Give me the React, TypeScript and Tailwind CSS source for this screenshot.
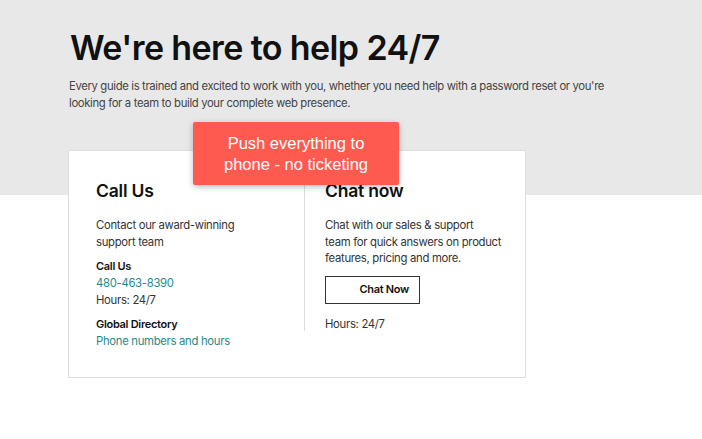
import React from 'react';

const sans = { fontFamily: 'Inter, "Noto Sans", sans-serif' };

export default function App() {
  return (
    <main
      style={sans}
      className="relative h-[439px] w-[702px] overflow-hidden bg-[linear-gradient(to_bottom,#e8e8e8_195px,#ffffff_195px)] px-[68px] pt-[26px]"
    >
      {/* HERO */}
      <h1 className="pl-[2px] text-[34px] font-semibold leading-[44px] tracking-[-0.6px] text-[#111111]">
        We're here to help 24/7
      </h1>
      <p className="mt-[8px] w-[560px] pl-px text-[11.3px] leading-[16.5px] tracking-[-0.35px] text-[#444444]">
        Every guide is trained and excited to work with you, whether you need help with a password reset or you're
        looking for a team to build your complete web presence.
      </p>

      {/* CARD */}
      <section className="mt-[39px] flex h-[228px] w-[458px] items-start border border-[#dedede] bg-white tracking-[-0.3px]">
        <div className="w-[235px] pl-[27px] pt-[28px]">
          <h2 className="text-[17.5px] font-semibold leading-[24px] tracking-[-0.2px] text-[#111111]">Call Us</h2>
          <p className="mt-[14px] w-[170px] text-[11.3px] leading-[17px] text-[#333333]">
            Contact our award-winning support team
          </p>
          <p className="mt-[7px] text-[11px] font-semibold leading-[17px] text-[#111111]">Call Us</p>
          <p className="text-[11.3px] leading-[17px] text-[#1f8a8c]">480-463-8390</p>
          <p className="text-[11.3px] leading-[16px] text-[#333333]">Hours: 24/7</p>
          <p className="mt-[8px] text-[11px] font-semibold leading-[17px] text-[#111111]">Global Directory</p>
          <p className="text-[11.3px] leading-[17px] text-[#1f8a8c]">Phone numbers and hours</p>
        </div>
        <div className="h-[180px] border-l border-[#dcdcdc] pl-[20px] pt-[28px]">
          <h2 className="text-[17.5px] font-semibold leading-[24px] tracking-[-0.2px] text-[#111111]">Chat now</h2>
          <p className="mt-[14px] w-[190px] text-[11.3px] leading-[16.5px] text-[#333333]">
            Chat with our sales &amp; support
            <br />
            team for quick answers on product features, pricing and more.
          </p>
          <button className="mt-[9px] flex h-[28px] w-[95px] items-center justify-end border border-[#333333] pr-[10px] text-[11px] font-semibold text-[#111111]">
            Chat Now
          </button>
          <p className="mt-[12px] text-[11.3px] leading-[17px] text-[#333333]">Hours: 24/7</p>
        </div>
      </section>

      {/* ANNOTATION */}
      <div
        style={{ fontFamily: '"Liberation Sans", Arial, sans-serif' }}
        className="absolute left-[193px] top-[122px] flex h-[63px] w-[206px] flex-col items-center justify-center rounded-[2px] bg-[#fe5a50] text-center text-[16.5px] leading-[21px] text-white shadow-[0_2px_6px_rgba(0,0,0,0.25)]"
      >
        <span>Push everything to</span>
        <span>phone - no ticketing</span>
      </div>
    </main>
  );
}
